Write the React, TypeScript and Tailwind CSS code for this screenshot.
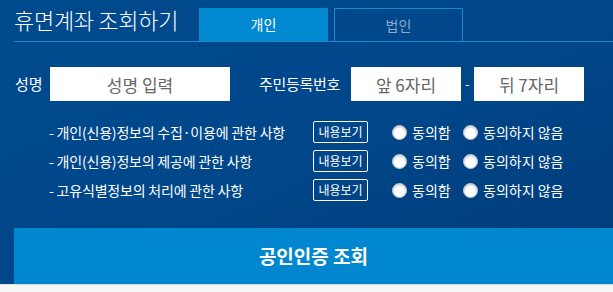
import { useState } from 'react'

const TERMS = [
  '- 개인(신용)정보의 수집·이용에 관한 사항',
  '- 개인(신용)정보의 제공에 관한 사항',
  '- 고유식별정보의 처리에 관한 사항',
]

function Radio({ label, checked, onClick }: { label: string; checked: boolean; onClick: () => void }) {
  return (
    <label onClick={onClick} className="flex items-center gap-[5px] cursor-pointer">
      <span className="w-[15px] h-[15px] rounded-full bg-white border border-[#b9c3cf] shadow-[inset_0_1px_2px_rgba(0,0,0,0.25)] flex items-center justify-center">
        {checked && <span className="w-[7px] h-[7px] rounded-full bg-[#0a5aa8]" />}
      </span>
      <span>{label}</span>
    </label>
  )
}

export default function App() {
  const [tab, setTab] = useState<'person' | 'corp'>('person')
  const [agree, setAgree] = useState<(boolean | null)[]>([null, null, null])

  const setRow = (i: number, v: boolean) => setAgree(a => a.map((x, j) => (j === i ? v : x)))

  const inputClass =
    'h-[34px] bg-white text-center text-[17px] text-[#666] placeholder:text-[#666] outline-none'

  return (
    <div
      className="w-[613px] h-[292px] overflow-hidden bg-[#f6f6f6]"
      style={{ fontFamily: '"Noto Sans CJK KR", "Noto Sans", sans-serif' }}
    >
      <div className="h-[284px] bg-linear-to-br from-[#004a8e] via-[#00478a] to-[#003b78] text-white flex flex-col">
        {/* header */}
        <div className="ml-[14px] mt-2 flex items-end border-b border-[#1b87cf] h-[34px]">
          <h1 className="w-[185px] text-[22px] font-light leading-none tracking-[-0.3px] self-start">
            휴면계좌 조회하기
          </h1>
          <button
            onClick={() => setTab('person')}
            className={`w-[129px] h-[33px] text-[14px] ${tab === 'person' ? 'bg-[#0088d1] text-white' : 'border border-[#1b87cf] text-[#8fa9c9]'}`}
          >
            개인
          </button>
          <button
            onClick={() => setTab('corp')}
            className={`ml-[6px] w-[129px] h-[33px] text-[14px] ${tab === 'corp' ? 'bg-[#0088d1] text-white' : 'border border-b-0 border-[#1b87cf] text-[#8fa9c9]'}`}
          >
            법인
          </button>
        </div>

        {/* form */}
        <div className="ml-[15px] mt-[25px] flex items-center text-[15px]">
          <span className="w-[35px]">성명</span>
          <input className={`${inputClass} w-[180px]`} placeholder="성명 입력" />
          <span className="ml-[29px] w-[92px] tracking-[-0.3px]">주민등록번호</span>
          <input className={`${inputClass} w-[110px]`} placeholder="앞 6자리" />
          <span className="w-[13px] pl-[4px] text-[13px]">-</span>
          <input className={`${inputClass} w-[110px]`} placeholder="뒤 7자리" />
        </div>

        {/* agreements */}
        <div className="mt-[20px] flex flex-col gap-[7px] text-[14px]">
          {TERMS.map((t, i) => (
            <div key={t} className="flex items-center h-[22px]">
              <span className="ml-[49px] w-[264px] tracking-[-0.2px]">{t}</span>
              <button className="w-[55px] h-[22px] border border-white rounded-[2px] text-[12px] leading-none">
                내용보기
              </button>
              <div className="ml-[24px] w-[71px]">
                <Radio label="동의함" checked={agree[i] === true} onClick={() => setRow(i, true)} />
              </div>
              <Radio label="동의하지 않음" checked={agree[i] === false} onClick={() => setRow(i, false)} />
            </div>
          ))}
        </div>

        <button className="mt-auto ml-[14px] h-[56px] bg-[#0087d0] text-[19px] font-bold">
          공인인증 조회
        </button>
      </div>
      <div className="h-[8px] border-t border-[#dcdcdc]" />
    </div>
  )
}
